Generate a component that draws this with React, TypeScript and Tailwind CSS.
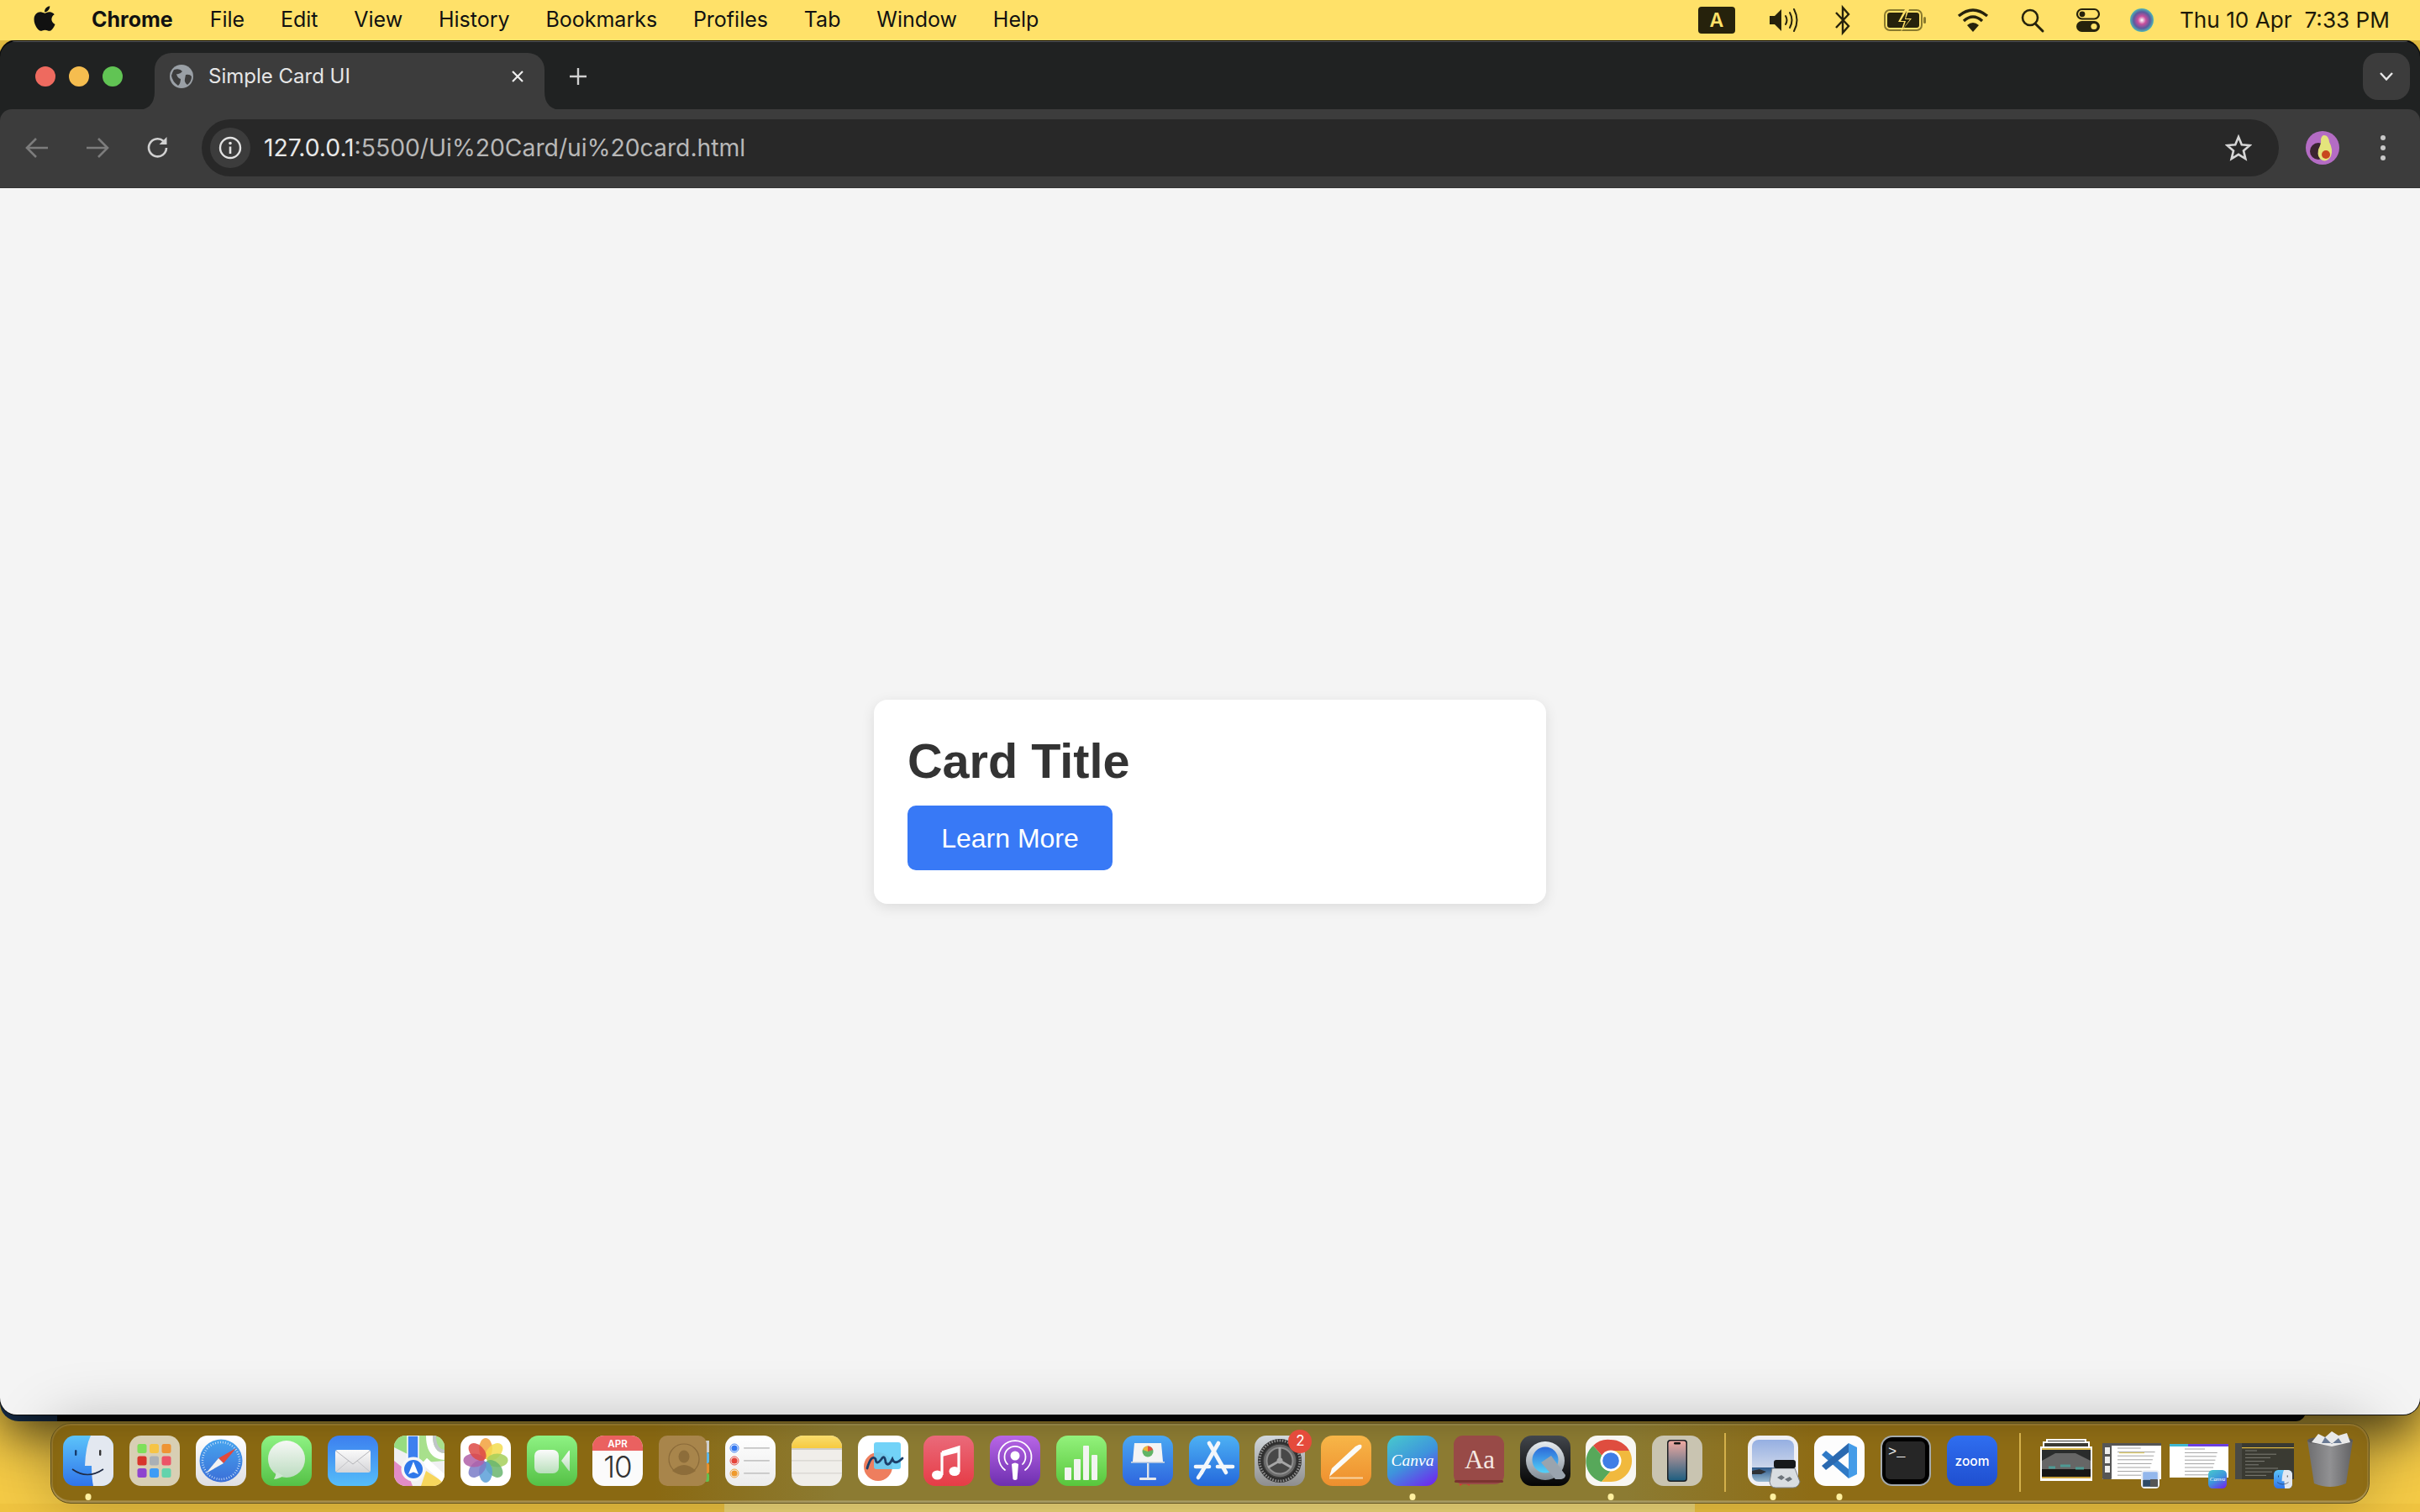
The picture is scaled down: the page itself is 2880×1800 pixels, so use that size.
import React from "react";
import { FaApple } from "react-icons/fa";

const S = ({ children, w = 60, h = 60, vb, className = "" }: { children: React.ReactNode; w?: number; h?: number; vb?: string; className?: string }) => (
  <svg width={w} height={h} viewBox={vb ?? `0 0 ${w} ${h}`} className={"block shrink-0 overflow-visible " + className}>{children}</svg>
);
const G = ({ id, a, b, x2 = 0, y2 = 1 }: { id: string; a: string; b: string; x2?: number; y2?: number }) => (
  <defs><linearGradient id={id} x1="0" y1="0" x2={x2} y2={y2}><stop offset="0" stopColor={a} /><stop offset="1" stopColor={b} /></linearGradient></defs>
);
const R = ({ fill }: { fill: string }) => <rect width="60" height="60" rx="14" fill={fill} />;

const FinderIcon = ({ size = 60 }: { size?: number }) => (
  <svg width={size} height={size} viewBox="0 0 60 60" className="block shrink-0">
    <defs>
      <linearGradient id="fa" x1="0" y1="0" x2="0" y2="1"><stop offset="0" stopColor="#5cc4fa" /><stop offset="1" stopColor="#2f74ea" /></linearGradient>
      <clipPath id="fc"><rect width="60" height="60" rx="14" /></clipPath>
    </defs>
    <g clipPath="url(#fc)">
      <rect width="60" height="60" fill="url(#fa)" />
      <path d="M33 0H60V60H36Q34 50 34 36H26Q27 12 33 0Z" fill="#e3e8f0" />
    </g>
    <rect x="14" y="17" width="2.4" height="7" rx="1.2" fill="#173a6b" />
    <rect x="43" y="17" width="2.4" height="7" rx="1.2" fill="#333" />
    <path d="M11 40Q29 53 48 40" fill="none" stroke="#1f2a44" strokeWidth="1.6" />
  </svg>
);
const Launchpad = () => {
  const c = ["#7ee05a", "#f6c445", "#ee9433", "#d8352c", "#aab0b5", "#ec5468", "#8e44cf", "#3f9cf5", "#63d3ac"];
  return (
    <S>
      <R fill="#d8cfb4" />
      {c.map((f, i) => <rect key={i} x={9.5 + (i % 3) * 14.5} y={10 + Math.floor(i / 3) * 14.5} width="11" height="11" rx="2.5" fill={f} />)}
    </S>
  );
};
const Safari = () => (
  <S>
    <G id="sa" a="#fff" b="#dfdfe2" />
    <G id="sb" a="#47a4ee" b="#3b6fd8" />
    <R fill="url(#sa)" />
    <circle cx="30" cy="30" r="25.5" fill="url(#sb)" />
    <circle cx="30" cy="30" r="22" fill="none" stroke="#d9e9fa" strokeWidth="2.5" strokeDasharray="0.8 2.2" />
    <path d="M48 15 L27 27 L33 33Z" fill="#e4483a" />
    <path d="M12 45 L27 27 L33 33Z" fill="#f2f2f2" />
  </S>
);
const Messages = () => (
  <S>
    <G id="ma" a="#8ef283" b="#55c146" />
    <G id="mb" a="#f6f8f5" b="#bcdcc0" />
    <R fill="url(#ma)" />
    <circle cx="30" cy="28" r="22" fill="url(#mb)" />
    <path d="M18 43 Q17 49 15 52 Q22 51 26 48Z" fill="#cfe6d2" />
  </S>
);
const Mail = () => (
  <S>
    <G id="ea" a="#3c7fef" b="#56bdf9" />
    <G id="eb" a="#fafafa" b="#d5d5d8" />
    <R fill="url(#ea)" />
    <rect x="9" y="17" width="42" height="27" rx="3" fill="url(#eb)" />
    <path d="M9.5 18 L30 34 L50.5 18" fill="none" stroke="#b4b4b8" strokeWidth="1" />
    <path d="M10 43 L25 30 M50 43 L35 30" fill="none" stroke="#c4c4c8" strokeWidth="1" />
  </S>
);
const Maps = () => (
  <S>
    <defs><clipPath id="mc"><rect width="60" height="60" rx="14" /></clipPath></defs>
    <g clipPath="url(#mc)">
      <rect width="60" height="60" fill="#f0f0f2" />
      <path d="M0 0H16V22L0 14Z" fill="#97dc80" />
      <path d="M20 0H60V30L36 32L20 20Z" fill="#a8e08c" />
      <path d="M0 30L15 42L22 60H0Z" fill="#e28cc6" />
      <path d="M32 60L38 42L60 56V60Z" fill="#f7d65c" />
      <path d="M42 0Q42 24 60 25" fill="none" stroke="#fff" strokeWidth="8" />
      <path d="M48 0Q48 18 60 19" fill="none" stroke="#c0c5c8" strokeWidth="4" />
      <rect x="16" y="0" width="13" height="34" fill="#3d80ef" stroke="#fff" strokeWidth="1.5" />
      <path d="M36 30L60 52" stroke="#fff" strokeWidth="9" />
    </g>
    <circle cx="23" cy="40" r="14.5" fill="#f6f6f8" />
    <circle cx="23" cy="40" r="11" fill="#2f78ea" />
    <path d="M23 31 L29 46 L23 43.5 L17 46Z" fill="#fff" />
  </S>
);
const Photos = () => {
  const c = ["#f2a13c", "#f3dc4d", "#a6cf5b", "#68b56f", "#5a9fd8", "#7a7cc8", "#b060a8", "#dd4a45"];
  return (
    <S>
      <R fill="#fff" />
      {c.map((f, i) => <ellipse key={i} cx="30" cy="15.5" rx="8" ry="12.5" fill={f} opacity="0.85" transform={`rotate(${i * 45} 30 29.5)`} />)}
      <circle cx="29.8" cy="29.5" r="1.2" fill="#fff" />
    </S>
  );
};
const Facetime = () => (
  <S>
    <G id="ta" a="#8ef283" b="#55c146" />
    <G id="tb" a="#fbfbfb" b="#b9dfbb" />
    <R fill="url(#ta)" />
    <rect x="9" y="23" width="29" height="28" rx="7" fill="url(#tb)" transform="translate(0 -6)" />
    <path d="M41 30 L50 18 Q51 17 51 19 V41 Q51 43 50 42Z" fill="url(#tb)" />
  </S>
);
const Calendar = () => (
  <S>
    <defs><clipPath id="cc"><rect width="60" height="60" rx="14" /></clipPath></defs>
    <g clipPath="url(#cc)">
      <rect width="60" height="60" fill="#fbfbfb" />
      <rect width="60" height="18" fill="#ea6160" />
    </g>
    <text x="30" y="14" textAnchor="middle" fontSize="11.5" fontWeight="600" fill="#fff" fontFamily="Inter, sans-serif">APR</text>
    <text x="30" y="50" textAnchor="middle" fontSize="35" fill="#333" fontFamily="Inter, sans-serif" fontWeight="300" letterSpacing="-1">10</text>
  </S>
);
const Contacts = () => (
  <S>
    <rect x="50" y="6" width="10" height="14" fill="#cfcfcf" />
    <rect x="50" y="20" width="10" height="13" rx="2" fill="#5cb6ea" />
    <rect x="50" y="33" width="10" height="12" rx="2" fill="#e8902f" />
    <rect x="50" y="45" width="10" height="10" rx="2" fill="#63c04f" />
    <rect x="0" y="0" width="57" height="60" rx="10" fill="#a8854b" />
    <circle cx="30" cy="28" r="18" fill="none" stroke="#8a6a39" strokeWidth="1.2" />
    <ellipse cx="30" cy="25" rx="6.5" ry="7.5" fill="#8d6d3a" />
    <path d="M16 42 Q30 28 44 42 Q30 52 16 42Z" fill="#8d6d3a" />
  </S>
);
const Reminders = () => (
  <S>
    <G id="ra" a="#fff" b="#ececec" />
    <R fill="url(#ra)" />
    {[["#3478f0", 15], ["#e5433a", 30], ["#ef9a2d", 45]].map(([c, y]) => (
      <g key={c as string}>
        <circle cx="11" cy={y as number} r="5" fill="none" stroke={c as string} strokeWidth="0.9" />
        <circle cx="11" cy={y as number} r="3.6" fill={c as string} />
        <rect x="22" y={(y as number) - 1} width="31" height="1.7" rx="0.8" fill="#c6c6c6" />
      </g>
    ))}
  </S>
);
const Notes = () => (
  <S>
    <defs><clipPath id="nc"><rect width="60" height="60" rx="14" /></clipPath></defs>
    <G id="na" a="#f9dd6e" b="#f6ca3f" />
    <g clipPath="url(#nc)">
      <rect width="60" height="60" fill="#f0eeea" />
      <rect width="60" height="15" fill="url(#na)" />
      <rect y="15" width="60" height="2" fill="#cfcdc8" />
      <rect y="29" width="60" height="1.6" fill="#dcdad5" />
      <rect y="44" width="60" height="1.6" fill="#dcdad5" />
    </g>
  </S>
);
const Freeform = () => (
  <S>
    <R fill="#fff" />
    <circle cx="24" cy="37" r="17" fill="#ee7e5e" />
    <rect x="19" y="8" width="32" height="32" rx="3" fill="#66cff7" opacity="0.92" />
    <path d="M11 39 Q16 22 21 28 Q22 36 28 28 Q32 22 33 32 Q36 38 41 28 Q44 36 53 27" fill="none" stroke="#1c3f69" strokeWidth="2.8" strokeLinecap="round" />
  </S>
);
const Music = () => (
  <S>
    <G id="ua" a="#ea6a7a" b="#e63c46" />
    <R fill="url(#ua)" />
    <path d="M22 20 L42 14 V43" fill="none" stroke="#fff" strokeWidth="3.2" />
    <path d="M22 20 V47" stroke="#fff" strokeWidth="3.2" />
    <path d="M22 19 L42 13.5 V20 L22 25Z" fill="#fff" />
    <ellipse cx="16.5" cy="47" rx="6.5" ry="5.5" fill="#fff" />
    <ellipse cx="37" cy="42.5" rx="6.5" ry="5.5" fill="#fff" />
  </S>
);
const Podcasts = () => (
  <S>
    <G id="pa" a="#b866e6" b="#6e2fb0" />
    <R fill="url(#pa)" />
    <g fill="none" stroke="#fff" strokeWidth="1.8" strokeLinecap="round">
      <path d="M18 41 A19.5 19.5 0 1 1 42 41" />
      <path d="M21 34 A12.5 12.5 0 1 1 39 34" />
    </g>
    <circle cx="30" cy="24" r="5.5" fill="#fff" />
    <path d="M26 34 Q30 31 34 34 L32.5 52 Q30 54 27.5 52Z" fill="#fff" />
  </S>
);
const Numbers = () => (
  <S>
    <G id="ba" a="#93f27c" b="#58c63c" />
    <R fill="url(#ba)" />
    {[[10, 38, 8, 15], [21, 28, 8, 25], [32, 12, 7, 41], [42, 23, 7, 30]].map(([x, y, w, h]) => <rect key={x} x={x} y={y} width={w} height={h} rx="1" fill="#f1f4f0" />)}
  </S>
);
const Keynote = () => (
  <S>
    <G id="ka" a="#4aa8f2" b="#2e65de" />
    <R fill="url(#ka)" />
    <path d="M14 9 H46 L48 31 H12Z" fill="#f4f4f4" />
    <circle cx="30" cy="19" r="6.5" fill="#62b466" />
    <path d="M30 19 V12.5 A6.5 6.5 0 0 1 36 17Z" fill="#e44e3e" />
    <path d="M30 19 L24 17 A6.5 6.5 0 0 1 30 12.5Z" fill="#f0b43c" />
    <rect x="10" y="31" width="40" height="1.6" fill="#d5dbe2" />
    <rect x="29" y="33" width="2.4" height="18" fill="#dfe3e8" />
    <rect x="20" y="50" width="20" height="3" rx="1" fill="#e6e8ea" />
  </S>
);
const AppStore = () => (
  <S>
    <G id="aa" a="#4db1f4" b="#2468dc" />
    <R fill="url(#aa)" />
    <g stroke="#f3f7fb" strokeWidth="4.6" strokeLinecap="round">
      <path d="M35 9 L15 44" /><path d="M24 9 L44 44" /><path d="M8 37 H24" /><path d="M34 37 H52" /><path d="M15 44 L11 50" />
    </g>
  </S>
);
const Settings = () => (
  <div className="relative w-[60px] h-[60px]">
    <S>
      <G id="xa" a="#d2d8dc" b="#8e8e8e" />
      <R fill="url(#xa)" />
      <circle cx="30" cy="30" r="26" fill="#2c2c2c" />
      <circle cx="30" cy="30" r="24" fill="none" stroke="#8c8c8c" strokeWidth="3" strokeDasharray="1.6 1.6" />
      <circle cx="30" cy="30" r="20" fill="#6a6a6a" stroke="#3a3a3a" strokeWidth="1.5" />
      <circle cx="30" cy="30" r="15.5" fill="#484848" stroke="#8e8e8e" strokeWidth="2" />
      <g stroke="#a6a6a6" strokeWidth="3"><path d="M30 30V14" /><path d="M30 30L16 38" /><path d="M30 30L44 38" /></g>
      <circle cx="30" cy="30" r="3.5" fill="#a6a6a6" />
    </S>
    <div className="absolute -top-[7px] left-[40px] w-[28px] h-[28px] rounded-full bg-[#E54B3C] text-white text-[17px] flex items-center justify-center font-['Inter',sans-serif]">2</div>
  </div>
);
const Pages = () => (
  <S>
    <G id="ga" a="#f7b648" b="#ee8f2e" />
    <R fill="url(#ga)" />
    <path d="M45 11 Q50 10 48 15 L18 42 L10 49 L13 39 L41 13Z" fill="#fbfbf7" />
    <path d="M10 50.5 H50" stroke="#f9d4a0" strokeWidth="1.8" />
  </S>
);
const CanvaIcon = ({ size = 60 }: { size?: number }) => (
  <svg width={size} height={size} viewBox="0 0 60 60" className="block shrink-0">
    <defs><linearGradient id="va" x1="0.2" y1="0" x2="0.8" y2="1"><stop offset="0" stopColor="#46c2cf" /><stop offset="0.5" stopColor="#3e94dc" /><stop offset="1" stopColor="#6c2eed" /></linearGradient></defs>
    <R fill="url(#va)" />
    <text x="30" y="36" textAnchor="middle" fontSize="19.5" fontStyle="italic" fill="#fff" fontFamily="'Liberation Serif', serif">Canva</text>
  </svg>
);
const Dictionary = () => (
  <S>
    <path d="M7 54 H19 V63 L13 60 L7 63Z" fill="#d63e36" transform="translate(0 -3)" />
    <rect width="60" height="58" rx="11" fill="#984a47" />
    <rect x="1" y="53" width="58" height="3" rx="1.5" fill="#7a3330" />
    <text x="31" y="39" textAnchor="middle" fontSize="31" fill="#f5e8e2" fontFamily="'Liberation Serif', serif">Aa</text>
  </S>
);
const QuickTime = () => (
  <S>
    <G id="qa" a="#42464c" b="#050505" />
    <G id="qb" a="#e8ecf0" b="#7f8a94" />
    <G id="qc" a="#2c68d8" b="#54d2f8" />
    <R fill="url(#qa)" />
    <circle cx="30" cy="30" r="23" fill="url(#qb)" />
    <circle cx="30" cy="29" r="15.5" fill="url(#qc)" />
    <path d="M25 32 L37 24 L54 47 Q54 51 49 52 L42 52Z" fill="#9aa4ae" />
  </S>
);
const ChromeIcon = () => (
  <S>
    <R fill="#f8f7f2" />
    <path d="M30 5 A25 25 0 0 1 52 18 L30 18 A12 12 0 0 0 19.5 24 L9 12 A25 25 0 0 1 30 5Z" fill="#df4d3f" />
    <path d="M9 12 L19.5 24 A12 12 0 0 0 30 42 L19 55 A25 25 0 0 1 9 12Z" fill="#57a85a" />
    <path d="M52 18 A25 25 0 0 1 30 55 L19 55 L30 42 A12 12 0 0 0 40 24 L30 18Z" fill="#f1b93d" />
    <circle cx="30" cy="30" r="12.5" fill="#fff" />
    <circle cx="30" cy="30" r="9.8" fill="#3f7de6" />
  </S>
);
const IPhone = () => (
  <S>
    <G id="ia" a="#f0a9a1" b="#1e5e80" />
    <R fill="#c9c4b1" />
    <rect x="18" y="5" width="24" height="50" rx="4" fill="#1b1f24" />
    <rect x="19.5" y="6.5" width="21" height="47" rx="3" fill="url(#ia)" />
    <rect x="26" y="8" width="8" height="2.5" rx="1.2" fill="#111" />
  </S>
);
const Preview = () => (
  <S>
    <G id="wa" a="#95afe2" b="#ccd6ea" />
    <G id="wb" a="#2a5688" b="#9fc0d6" />
    <defs><clipPath id="wc"><rect x="5" y="5" width="50" height="50" rx="8" /></clipPath></defs>
    <R fill="#f0f0f4" />
    <g clipPath="url(#wc)">
      <rect x="5" y="5" width="50" height="34" fill="url(#wa)" />
      <rect x="5" y="38" width="50" height="18" fill="url(#wb)" />
      <path d="M5 42 L14 40 L22 43 L16 46 L5 46Z" fill="#2e3136" />
    </g>
    <path d="M29 39 H56 L62 55 Q60 62 54 62 H33 Q27 62 26 55Z" fill="#d9dde0" stroke="#7c8085" strokeWidth="1" />
    <rect x="31" y="29" width="26" height="10" rx="3" fill="#16181a" />
    <path d="M35 50 l5 -3 l4 3 l-4 3Z M44 52 l6 -3 l3 3 l-5 3Z" fill="#6d747a" />
  </S>
);
const VSCode = () => (
  <S>
    <R fill="#fdfdfd" />
    <path d="M41 51 L41 40 L14 18 L9 23Z" fill="#2f7ac6" />
    <path d="M41 9 L41 20 L14 41 L9 36Z" fill="#2a69b0" />
    <path d="M41 9 L51 14 V46 L41 51Z" fill="#459ce8" />
  </S>
);
const Terminal = () => (
  <S>
    <rect width="60" height="60" rx="14" fill="#a4aaad" />
    <rect x="2" y="2" width="56" height="56" rx="12" fill="#000" />
    <rect x="6" y="7" width="47" height="45" rx="5" fill="#262626" />
    <text x="9" y="24" fontSize="17" fill="#f2f2f2" fontFamily="'Liberation Mono', monospace">&gt;_</text>
  </S>
);
const ZoomIcon = () => (
  <S>
    <G id="za" a="#2f6ef0" b="#1f4fd0" />
    <R fill="url(#za)" />
    <text x="30" y="36" textAnchor="middle" fontSize="15.5" fill="#fff" fontFamily="Inter, sans-serif" fontWeight="500">zoom</text>
  </S>
);

const Dot = () => <div className="absolute left-1/2 -translate-x-1/2 top-[69px] w-[7px] h-[8px] rounded-full bg-[#FFF0A0]" />;
const App_ = ({ children, dot }: { children: React.ReactNode; dot?: boolean }) => (
  <div className="relative w-[60px] h-[60px] shrink-0">{children}{dot && <Dot />}</div>
);
const Divider = () => <div className="w-[2px] h-[70px] mt-[-3px] bg-[#D4B04A] shrink-0" />;

const StackThumb = () => (
  <S w={62} h={70}>
    <rect x="7" y="8" width="48" height="10" fill="#fff" /><rect x="9" y="10" width="44" height="6" fill="#3a3a34" />
    <rect x="3" y="11" width="56" height="10" fill="#fff" /><rect x="5" y="13" width="52" height="6" fill="#3a3a34" />
    <rect x="0" y="17" width="62" height="41" fill="#fff" />
    <rect x="2" y="19" width="58" height="36" fill="#2a2c2c" />
    <rect x="2" y="19" width="58" height="2" fill="#d9b84a" />
    <path d="M2 34 L18 25 H42 L60 34 V46 H2Z" fill="#666" />
    <path d="M2 44 H60 V54 H2Z" fill="#161616" />
    <path d="M10 42h8M24 40h12M42 43h10" stroke="#4e9a94" strokeWidth="3" />
    <rect x="2" y="53" width="58" height="2" fill="#c9a23f" />
  </S>
);
const DocLines = ({ n, x, w, y0, step }: { n: number; x: number; w: number; y0: number; step: number }) => (
  <g stroke="#8a8a8a" strokeWidth="0.8">
    {Array.from({ length: n }).map((_, i) => <path key={i} d={`M${x} ${y0 + i * step}h${w * (0.6 + ((i * 37) % 40) / 100)}`} />)}
  </g>
);
const Thumb1 = () => (
  <div className="relative w-[70px] h-[70px] shrink-0">
    <S w={70} h={70}>
      <rect x="0" y="13" width="70" height="43" fill="#fff" />
      <rect x="0" y="13" width="70" height="3" fill="#555" />
      <rect x="0" y="13" width="11" height="43" rx="1" fill="#565656" />
      <rect x="3" y="18" width="6" height="8" fill="#eee" /><rect x="3" y="29" width="6" height="8" fill="#eee" /><rect x="3" y="40" width="6" height="8" fill="#eee" />
      <DocLines n={8} x={18} w={46} y0={19} step={4.6} />
      <rect x="20" y="24" width="30" height="1.2" fill="#e2cf6a" />
    </S>
    <div className="absolute left-[46px] top-[45px]"><svg width="22" height="22" viewBox="0 0 60 60" className="block"><rect width="60" height="60" rx="12" fill="#eef0f4" /><rect x="6" y="6" width="48" height="26" rx="4" fill="#93b7ec" /><rect x="6" y="32" width="48" height="22" fill="#2d4a66" /><rect x="30" y="30" width="24" height="24" fill="#555" /></svg></div>
  </div>
);
const Thumb2 = () => (
  <div className="relative w-[70px] h-[70px] shrink-0">
    <S w={70} h={70}>
      <rect x="0" y="14" width="70" height="40" fill="#fff" />
      <rect x="0" y="14" width="70" height="3" fill="#6a3fe0" />
      <rect x="0" y="14" width="22" height="3" fill="#40b6d0" />
      <DocLines n={8} x={18} w={40} y0={20} step={4.4} />
    </S>
    <div className="absolute left-[46px] top-[45px]"><CanvaIcon size={22} /></div>
  </div>
);
const Thumb3 = () => (
  <div className="relative w-[70px] h-[70px] shrink-0">
    <S w={70} h={70}>
      <rect x="0" y="13" width="70" height="43" fill="#3a3a32" />
      <rect x="8" y="18" width="62" height="1.2" fill="#e2b83e" />
      <rect x="0" y="13" width="8" height="43" fill="#4a4a44" />
      <g stroke="#8e8e86" strokeWidth="0.8">
        {Array.from({ length: 8 }).map((_, i) => <path key={i} d={`M12 ${22 + i * 4.2}h${14 + ((i * 23) % 30)}`} />)}
      </g>
    </S>
    <div className="absolute left-[46px] top-[45px]"><FinderIcon size={22} /></div>
  </div>
);
const Trash = () => (
  <S w={56} h={70} className="mt-[-1px]">
    <defs><linearGradient id="tr" x1="0" y1="0" x2="1" y2="0"><stop offset="0" stopColor="#6e6e70" /><stop offset="0.5" stopColor="#919193" /><stop offset="1" stopColor="#626264" /></linearGradient></defs>
    <path d="M1 11 L55 11 L47 62 Q28 70 9 62Z" fill="url(#tr)" />
    <ellipse cx="28" cy="11" rx="27" ry="5" fill="#5a5a5c" />
    <path d="M6 13 L14 3 L22 7 L30 0 L38 5 L48 2 L52 13 L30 18Z" fill="#e9e9e9" />
    <path d="M22 7 L30 15 L38 8 L42 14 H18Z" fill="#6a7a94" />
  </S>
);

const Menu = ["File", "Edit", "View", "History", "Bookmarks", "Profiles", "Tab", "Window", "Help"];

export default function App() {
  return (
    <div className="relative w-[2880px] h-[1800px] overflow-hidden flex flex-col bg-[#F4CA46] font-['Inter',sans-serif]">
      {/* macOS menu bar */}
      <div className="relative z-[2] h-[48px] shrink-0 bg-[#FFE169] flex items-center text-[#111] pl-[36px] pr-[36px] text-[25px]">
        <FaApple className="text-[34px] mr-[39px] mt-[-4px]" />
        <span className="font-bold mr-[44px]">Chrome</span>
        <div className="flex gap-[42.8px]">
          {Menu.map((m) => <span key={m}>{m}</span>)}
        </div>
        <div className="ml-auto flex items-center text-[#26220c]">
          <div className="w-[44px] h-[32px] rounded-[4px] bg-[#26220c] text-[#FFE169] text-[23px] font-semibold flex items-center justify-center">A</div>
          <S w={40} h={34} className="ml-[40px]">
            <path d="M1 12H7L15 4V30L7 22H1Z" fill="#26220c" />
            <g fill="none" stroke="#26220c" strokeWidth="2" strokeLinecap="round"><path d="M20 12Q23 17 20 22" /><path d="M25 8Q30 17 25 26" /><path d="M30 4Q37 17 30 30" /></g>
          </S>
          <S w={20} h={36} className="ml-[38px]">
            <path d="M2 9L17 25L10 33V3L17 11L2 27" fill="none" stroke="#26220c" strokeWidth="2.4" />
          </S>
          <S w={52} h={26} className="ml-[39px]">
            <rect x="1" y="1" width="44" height="24" rx="6" fill="none" stroke="#8a7a2e" strokeWidth="2" />
            <rect x="4" y="4" width="38" height="18" rx="3" fill="#26220c" />
            <rect x="47" y="9" width="3" height="8" rx="1.5" fill="#8a7a2e" />
            <path d="M25 0L17 15H24L20 27L33 11H26L30 0Z" fill="#FFE169" />
            <path d="M27 2L20 14H26L23 23L31 12H25Z" fill="#26220c" />
          </S>
          <S w={38} h={30} className="ml-[35px]">
            <g fill="none" stroke="#26220c" strokeWidth="3.4"><path d="M2 10Q19 -4 36 10" /><path d="M8 16Q19 6 30 16" /></g>
            <path d="M12 21Q19 15 26 21L19 29Z" fill="#26220c" />
          </S>
          <S w={28} h={28} className="ml-[38px]">
            <circle cx="11" cy="11" r="9" fill="none" stroke="#26220c" strokeWidth="2.6" />
            <path d="M17 18L26 27" stroke="#26220c" strokeWidth="3" strokeLinecap="round" />
          </S>
          <S w={28} h={28} className="ml-[38px]">
            <rect x="1" y="1" width="26" height="11.5" rx="5.7" fill="none" stroke="#26220c" strokeWidth="2.2" />
            <circle cx="7" cy="6.8" r="3.4" fill="#26220c" />
            <rect x="0" y="15" width="28" height="13" rx="6.5" fill="#26220c" />
            <circle cx="21" cy="21.5" r="3.6" fill="#FFE169" />
          </S>
          <svg width="28" height="28" viewBox="0 0 28 28" className="block shrink-0 ml-[36px]">
            <defs><radialGradient id="si"><stop offset="0" stopColor="#fff" /><stop offset="0.35" stopColor="#c74f9d" /><stop offset="0.7" stopColor="#5a5a9e" /><stop offset="1" stopColor="#4fb7b7" /></radialGradient></defs>
            <circle cx="14" cy="14" r="14" fill="url(#si)" />
          </svg>
          <span className="ml-[31px] text-[26.2px] text-[#1d1a08] whitespace-pre">Thu 10 Apr  7:33 PM</span>
        </div>
      </div>

      {/* Chrome window */}
      <div className="relative z-[1] flex-1 min-h-0 flex flex-col rounded-[20px] overflow-hidden bg-[#202222] border-t border-black shadow-[0_0_0_1px_#111,0_24px_60px_rgba(0,0,0,0.7)]">
        <div className="h-[81px] shrink-0 relative flex border-t border-[#5a5a5a] pt-[13px]">
          <div className="flex items-center gap-[16px] pl-[42px] w-[184px] shrink-0 h-[56px]">
            <div className="w-[24px] h-[24px] rounded-full bg-[#EE6A5F]" />
            <div className="w-[24px] h-[24px] rounded-full bg-[#F5BD4F]" />
            <div className="w-[24px] h-[24px] rounded-full bg-[#61C454]" />
          </div>
          {/* active tab */}
          <div className="relative w-[464px] h-[68px] rounded-t-[20px] bg-[#3C3C3C] flex items-start pt-[14px] pl-[18px] pr-[24px] text-[#e6e6e6] shrink-0">
            <svg width="28" height="28" viewBox="0 0 28 28" className="block shrink-0">
              <circle cx="14" cy="14" r="14" fill="#9aa0a6" />
              <path d="M5 6Q12 4 15 8Q12 12 8 11Q9 16 13 17Q13 22 10 25Q3 20 2 13Q3 9 5 6ZM19 12Q24 11 26 14Q26 20 21 24Q17 21 18 17Z" fill="#3c3c3c" />
            </svg>
            <span className="ml-[18px] text-[24px] leading-[28px]">Simple Card UI</span>
            <svg width="16" height="16" viewBox="0 0 16 16" className="block ml-auto mt-[6px]"><path d="M2 2L14 14M14 2L2 14" stroke="#eee" strokeWidth="2.2" /></svg>
            <svg width="22" height="22" viewBox="0 0 22 22" className="absolute -left-[22px] bottom-0 block"><path d="M22 0V22H0Q22 22 22 0Z" fill="#3C3C3C" /></svg>
            <svg width="22" height="22" viewBox="0 0 22 22" className="absolute -right-[22px] bottom-0 block"><path d="M0 0V22H22Q0 22 0 0Z" fill="#3C3C3C" /></svg>
          </div>
          <svg width="22" height="22" viewBox="0 0 22 22" className="block ml-[29px] mt-[17px]"><path d="M11 1V21M1 11H21" stroke="#d0d0d0" strokeWidth="2.4" /></svg>
          <div className="ml-auto mr-[12px] w-[56px] h-[56px] rounded-[18px] bg-[#3C3C3C] flex items-center justify-center">
            <svg width="16" height="10" viewBox="0 0 16 10" className="block"><path d="M1 1L8 8.5L15 1" fill="none" stroke="#e8e8e8" strokeWidth="2.4" /></svg>
          </div>
        </div>

        {/* toolbar */}
        <div className="h-[93px] shrink-0 bg-[#3C3C3C] rounded-t-[14px] flex items-center pl-[30px] pr-[41px] pb-[1px]">
          <svg width="28" height="26" viewBox="0 0 28 26" className="block shrink-0"><path d="M27 13H3M13 2L2 13L13 24" fill="none" stroke="#7c7c7c" strokeWidth="2.6" /></svg>
          <svg width="28" height="26" viewBox="0 0 28 26" className="block shrink-0 ml-[44px]"><path d="M1 13H25M15 2L26 13L15 24" fill="none" stroke="#7c7c7c" strokeWidth="2.6" /></svg>
          <svg width="28" height="28" viewBox="0 0 28 28" className="block shrink-0 ml-[44px]"><path d="M24 14A10.5 10.5 0 1 1 20.5 6" fill="none" stroke="#d0d0d0" strokeWidth="2.6" /><path d="M24.5 1V10H15.5Z" fill="#d0d0d0" /></svg>
          <div className="ml-[38px] flex-1 h-[68px] rounded-full bg-[#282828] flex items-center pl-[10px] pr-[32px]">
            <div className="w-[48px] h-[48px] rounded-full bg-[#3C3C3C] flex items-center justify-center shrink-0">
              <svg width="28" height="28" viewBox="0 0 28 28" className="block"><circle cx="14" cy="14" r="12" fill="none" stroke="#e2e2e2" strokeWidth="2.4" /><path d="M14 12.5V21" stroke="#e2e2e2" strokeWidth="2.6" /><circle cx="14" cy="8.5" r="1.8" fill="#e2e2e2" /></svg>
            </div>
            <span className="ml-[16px] text-[28.3px] text-[#e8e8e8] whitespace-nowrap">127.0.0.1<span className="text-[#b8b8b8]">:5500/Ui%20Card/ui%20card.html</span></span>
            <svg width="32" height="32" viewBox="0 0 32 32" className="block ml-auto shrink-0"><path d="M16 3L19.8 12.2L29.5 13L22 19.4L24.3 29L16 23.8L7.7 29L10 19.4L2.5 13L12.2 12.2Z" fill="none" stroke="#d6d6d6" strokeWidth="2.6" /></svg>
          </div>
          <svg width="40" height="40" viewBox="0 0 40 40" className="block shrink-0 ml-[32px]">
            <circle cx="20" cy="20" r="20" fill="#B46CC4" />
            <circle cx="15" cy="24" r="10" fill="#3a2430" />
            <path d="M22 5Q27 5 28 13Q33 22 30 30Q26 37 20 35Q13 32 15 22Q19 14 18 10Q19 5 22 5Z" fill="#E4E47C" />
            <circle cx="24" cy="28" r="5" fill="#C8481E" />
          </svg>
          <div className="flex flex-col gap-[6px] ml-[49px]">
            <div className="w-[6px] h-[6px] rounded-full bg-[#c8c8c8]" />
            <div className="w-[6px] h-[6px] rounded-full bg-[#c8c8c8]" />
            <div className="w-[6px] h-[6px] rounded-full bg-[#c8c8c8]" />
          </div>
        </div>

        {/* page */}
        <div className="flex-1 min-h-0 bg-[#F4F4F4] flex items-center justify-center border-t border-[#323232]">
          <div className="w-[800px] rounded-[16px] bg-white p-[40px] shadow-[0_4px_16px_rgba(0,0,0,0.1)] font-['Liberation_Sans',sans-serif]">
            <h2 className="text-[57.6px] leading-[66px] font-bold text-[#333] mb-[20px]">Card Title</h2>
            <button className="block w-[244px] h-[77px] rounded-[10px] bg-[#3879F6] text-white text-[32px] pt-[1px]">Learn More</button>
          </div>
        </div>
      </div>

      {/* window behind, peeking under */}
      <div className="h-[28px] -mt-[20px] shrink-0 mr-[136px] flex rounded-bl-[22px] rounded-br-[12px] overflow-hidden">
        <div className="w-[68px] bg-[#1D3A5E]" />
        <div className="flex-1 bg-[#0c0c0c]" />
      </div>

      {/* Dock */}
      <div className="relative z-10 mt-[2px] mx-[60px] h-[96px] shrink-0 rounded-[24px] border border-[#5f5120] bg-[linear-gradient(90deg,#8A6912_0%,#8A6912_26%,#8C7B32_34%,#8C7B32_68%,#8E6C15_76%,#8E6C15_100%)] shadow-[0_0_70px_rgba(0,0,0,0.26),inset_0_-3px_0_rgba(255,255,255,0.16),inset_0_0_0_2px_rgba(255,255,255,0.1),inset_0_24px_24px_-14px_rgba(0,0,0,0.1)] flex items-start pl-[14px] pt-[14px]">
        <div className="flex gap-[18.8px] items-start">
          <App_ dot><FinderIcon /></App_>
          <App_><Launchpad /></App_>
          <App_><Safari /></App_>
          <App_><Messages /></App_>
          <App_><Mail /></App_>
          <App_><Maps /></App_>
          <App_><Photos /></App_>
          <App_><Facetime /></App_>
          <App_><Calendar /></App_>
          <App_><Contacts /></App_>
          <App_><Reminders /></App_>
          <App_><Notes /></App_>
          <App_><Freeform /></App_>
          <App_><Music /></App_>
          <App_><Podcasts /></App_>
          <App_><Numbers /></App_>
          <App_><Keynote /></App_>
          <App_><AppStore /></App_>
          <App_><Settings /></App_>
          <App_><Pages /></App_>
          <App_ dot><CanvaIcon /></App_>
          <App_><Dictionary /></App_>
          <App_><QuickTime /></App_>
          <App_ dot><ChromeIcon /></App_>
          <App_><IPhone /></App_>
        </div>
        <div className="ml-[26px]"><Divider /></div>
        <div className="ml-[26px] flex gap-[18.8px] items-start">
          <App_ dot><Preview /></App_>
          <App_ dot><VSCode /></App_>
          <App_><Terminal /></App_>
          <App_><ZoomIcon /></App_>
        </div>
        <div className="ml-[26px]"><Divider /></div>
        <div className="ml-[23px] flex items-start mt-[-4px]">
          <StackThumb />
          <div className="ml-[12px]"><Thumb1 /></div>
          <div className="ml-[10px]"><Thumb2 /></div>
          <div className="ml-[8px]"><Thumb3 /></div>
          <div className="ml-[15px]"><Trash /></div>
        </div>
      </div>

      {/* wallpaper strip below the dock */}
      <div className="h-[10px] shrink-0 flex">
        <div className="w-[862px] bg-[#F0C440]" />
        <div className="flex-1 bg-[#F0D878]" />
        <div className="w-[863px] bg-[#F0C440]" />
      </div>
    </div>
  );
}
